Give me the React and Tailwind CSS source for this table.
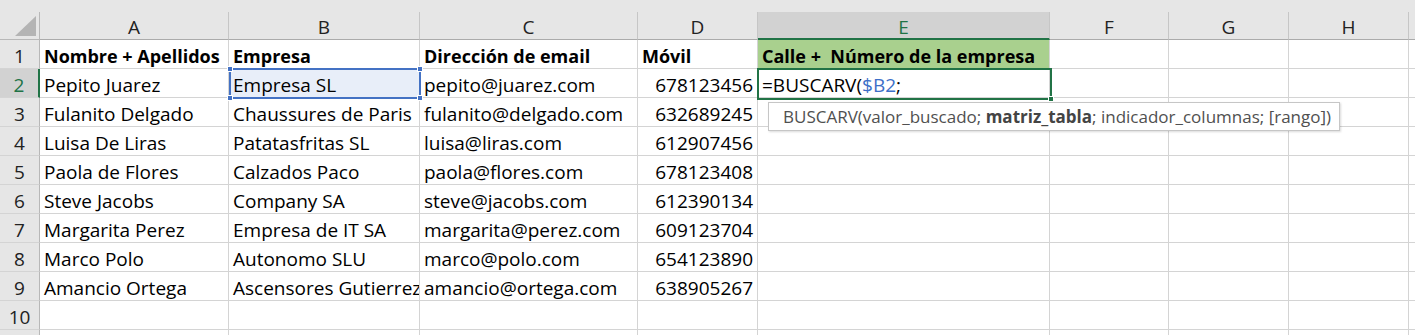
import React from "react";

const COLS = [
  { key: "A", w: "w-[189px]" },
  { key: "B", w: "w-[191px]" },
  { key: "C", w: "w-[218px]" },
  { key: "D", w: "w-[120px]" },
  { key: "E", w: "w-[292px]" },
  { key: "F", w: "w-[119px]" },
  { key: "G", w: "w-[120px]" },
  { key: "H", w: "w-[120px]" },
];

const DATA = [
  ["Pepito Juarez", "Empresa SL", "pepito@juarez.com", "678123456"],
  ["Fulanito Delgado", "Chaussures de Paris", "fulanito@delgado.com", "632689245"],
  ["Luisa De Liras", "Patatasfritas SL", "luisa@liras.com", "612907456"],
  ["Paola de Flores", "Calzados Paco", "paola@flores.com", "678123408"],
  ["Steve Jacobs", "Company SA", "steve@jacobs.com", "612390134"],
  ["Margarita Perez", "Empresa de IT SA", "margarita@perez.com", "609123704"],
  ["Marco Polo", "Autonomo SLU", "marco@polo.com", "654123890"],
  ["Amancio Ortega", "Ascensores Gutierrez", "amancio@ortega.com", "638905267"],
];

const font = { fontFamily: '"Open Sans", "Liberation Sans", sans-serif' };

function Cell({ w, children, className = "" }) {
  return (
    <div
      className={`${w} shrink-0 h-[29px] border-r border-b border-[#d4d4d4] overflow-hidden whitespace-nowrap px-[4px] leading-[32px] text-black ${className}`}
    >
      {children}
    </div>
  );
}

function RowHeader({ n, active }) {
  return (
    <div
      className={`w-[40px] shrink-0 h-[29px] border-b border-[#d4d4d4] text-center leading-[32px] text-[19px] ${
        active
          ? "bg-[#d2d2d2] text-[#217346] border-r-2 border-r-[#217346]"
          : "bg-[#e6e6e6] text-[#222] border-r border-r-[#b8b8b8]"
      }`}
    >
      {n}
    </div>
  );
}

export default function App() {
  const rows = [];
  rows.push(
    <div key="r1" className="flex">
      <RowHeader n={1} />
      <Cell w="w-[189px]" className="font-bold text-[18px]">Nombre + Apellidos</Cell>
      <Cell w="w-[191px]" className="font-bold text-[18px]">Empresa</Cell>
      <Cell w="w-[218px]" className="font-bold text-[18px]">Dirección de email</Cell>
      <Cell w="w-[120px]" className="font-bold text-[18px]">Móvil</Cell>
      <Cell w="w-[292px]" className="font-bold text-[18px] bg-[#a9d08e]">Calle +&nbsp; Número de la empresa</Cell>
      <Cell w="w-[119px]" />
      <Cell w="w-[120px]" />
      <Cell w="w-[120px]" />
      <Cell w="w-[20px]" />
    </div>
  );
  DATA.forEach((r, i) => {
    rows.push(
      <div key={`r${i + 2}`} className="flex">
        <RowHeader n={i + 2} active={i === 0} />
        <Cell w="w-[189px]" className="text-[19px]">{r[0]}</Cell>
        <Cell w="w-[191px]" className={`text-[19px] ${i === 0 ? "bg-[#e8eef9]" : ""}`}>{r[1]}</Cell>
        <Cell w="w-[218px]" className="text-[19px]">{r[2]}</Cell>
        <Cell w="w-[120px]" className="text-[19px] text-right">{r[3]}</Cell>
        <Cell w="w-[292px]" className="text-[19px]">
          {i === 0 ? (
            <span>
              =BUSCARV(<span className="text-[#3c6fc8]">$B2</span>;
            </span>
          ) : null}
        </Cell>
        <Cell w="w-[119px]" />
        <Cell w="w-[120px]" />
        <Cell w="w-[120px]" />
        <Cell w="w-[20px]" />
      </div>
    );
  });
  [10, 11].forEach((n) => {
    rows.push(
      <div key={`r${n}`} className="flex">
        <RowHeader n={n === 10 ? n : ""} />
        {COLS.map((c) => (
          <Cell key={c.key} w={c.w} />
        ))}
        <Cell w="w-[20px]" />
      </div>
    );
  });

  return (
    <div className="relative w-[1415px] h-[335px] overflow-hidden bg-white" style={font}>
      <div className="h-[12px] bg-[#e6e6e6]" />
      <div className="flex h-[28px] bg-[#e6e6e6]">
        <div className="relative w-[40px] shrink-0 h-[28px] border-r border-b border-[#b8b8b8]">
          <div className="absolute right-[3px] bottom-[3px] w-0 h-0 border-l-[21px] border-l-transparent border-b-[20px] border-b-[#b4b4b4]" />
        </div>
        {COLS.map((c) => (
          <div
            key={c.key}
            className={`${c.w} shrink-0 h-[28px] border-r border-[#c6c6c6] text-center leading-[30px] text-[19px] ${
              c.key === "E"
                ? "bg-[#d2d2d2] text-[#217346] border-b-2 border-b-[#217346]"
                : "text-[#222] border-b border-b-[#ababab]"
            }`}
          >
            {c.key}
          </div>
        ))}
        <div className="w-[20px] shrink-0 h-[28px] border-b border-[#ababab]" />
      </div>
      {rows}

      {/* B2 reference highlight */}
      <div className="absolute left-[229px] top-[68px] w-[192px] h-[31px] border-2 border-[#4472c4] pointer-events-none">
        <div className="absolute -left-[4px] -top-[4px] w-[6px] h-[6px] bg-[#4472c4] border border-white" />
        <div className="absolute -right-[4px] -top-[4px] w-[6px] h-[6px] bg-[#4472c4] border border-white" />
        <div className="absolute -left-[4px] -bottom-[4px] w-[6px] h-[6px] bg-[#4472c4] border border-white" />
        <div className="absolute -right-[4px] -bottom-[4px] w-[6px] h-[6px] bg-[#4472c4] border border-white" />
      </div>

      {/* E2 active cell border */}
      <div className="absolute left-[757px] top-[68px] w-[295px] h-[32px] border-2 border-[#217346] pointer-events-none">
        <div className="absolute -right-[4px] -bottom-[4px] w-[6px] h-[6px] bg-[#217346] border border-white" />
      </div>

      {/* Tooltip */}
      <div
        className="absolute left-[768px] top-[102px] w-[572px] h-[29px] bg-white border border-[#c6c6c6] shadow-[1px_1px_2px_rgba(0,0,0,0.15)] px-[14px] leading-[27px] text-[17px] text-[#505050] whitespace-nowrap overflow-hidden"
        style={font}
      >
        BUSCARV(valor_buscado; <span className="font-bold text-[#444]">matriz_tabla</span>; indicador_columnas; [rango])
      </div>
    </div>
  );
}
